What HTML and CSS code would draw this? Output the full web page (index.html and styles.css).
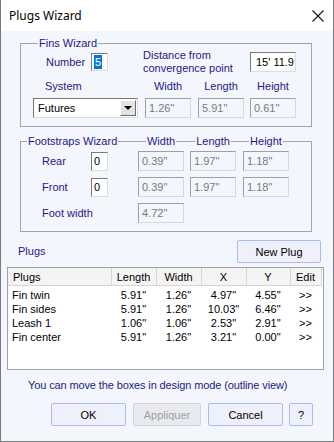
FILE: index.html
```html
<!DOCTYPE html>
<html lang="en">
<head>
<meta charset="UTF-8" />
<title>Plugs Wizard</title>
<link rel="stylesheet" href="styles.css">
</head>
<body>

  <div class="window">
    <div class="titlebar">
      <span class="title">Plugs Wizard</span>
      <svg class="close" width="12" height="12" viewBox="0 0 12 12">
        <path d="M0.5 0.5 L11.5 11.5 M11.5 0.5 L0.5 11.5" stroke="#111" stroke-width="1.1" fill="none" />
      </svg>
    </div>

    <div class="dialog">

      <div class="group fins">
        <div class="group-title"><span>Fins Wizard</span></div>
        <div class="fins-grid">
          <div class="number-cell">
            <span class="label number-label">Number</span>
            <div class="field num-field"><span class="selected">5</span></div>
          </div>
          <div class="label distance">Distance from<br>convergence point</div>
          <div class="field dist-field">15' 11.9</div>

          <div class="label system">System</div>
          <div class="label col-head">Width</div>
          <div class="label col-head">Length</div>
          <div class="label col-head">Height</div>

          <div class="select">
            <span class="select-text">Futures</span>
            <span class="select-btn"><span class="arrow"></span></span>
          </div>
          <div class="field off">1.26"</div>
          <div class="field off">5.91"</div>
          <div class="field off">0.61"</div>
        </div>
      </div>

      <div class="group straps">
        <div class="straps-head">
          <span class="head-main">Footstraps Wizard</span>
          <span class="head-col"><span>Width</span></span>
          <span class="head-col"><span>Length</span></span>
          <span class="head-col"><span>Height</span></span>
        </div>
        <div class="straps-grid">
          <div class="label">Rear</div>
          <div class="field num-field">0</div>
          <div class="field off">0.39"</div>
          <div class="field off">1.97"</div>
          <div class="field off">1.18"</div>

          <div class="label">Front</div>
          <div class="field num-field">0</div>
          <div class="field off">0.39"</div>
          <div class="field off">1.97"</div>
          <div class="field off">1.18"</div>

          <div class="label foot-label">Foot width</div>
          <div class="field off">4.72"</div>
        </div>
      </div>

      <div class="plugs-row">
        <span class="label">Plugs</span>
        <button class="btn new-plug">New Plug</button>
      </div>

      <div class="listview">
        <table>
          <colgroup>
            <col style="width: 103px">
            <col style="width: 45px">
            <col style="width: 45px">
            <col style="width: 45px">
            <col style="width: 44px">
            <col style="width: 31px">
            <col>
          </colgroup>
          <thead>
            <tr>
              <th class="name">Plugs</th>
              <th>Length</th>
              <th>Width</th>
              <th>X</th>
              <th>Y</th>
              <th>Edit</th>
              <th class="rest"></th>
            </tr>
          </thead>
          <tbody>
            <tr class="first">
              <td class="name">Fin twin</td><td>5.91"</td><td>1.26"</td><td>4.97"</td><td>4.55"</td><td>&gt;&gt;</td><td></td>
            </tr>
            <tr>
              <td class="name">Fin sides</td><td>5.91"</td><td>1.26"</td><td>10.03"</td><td>6.46"</td><td>&gt;&gt;</td><td></td>
            </tr>
            <tr>
              <td class="name">Leash 1</td><td>1.06"</td><td>1.06"</td><td>2.53"</td><td>2.91"</td><td>&gt;&gt;</td><td></td>
            </tr>
            <tr>
              <td class="name">Fin center</td><td>5.91"</td><td>1.26"</td><td>3.21"</td><td>0.00"</td><td>&gt;&gt;</td><td></td>
            </tr>
          </tbody>
        </table>
      </div>

      <div class="hint">You can move the boxes in design mode (outline view)</div>

      <div class="buttons">
        <button class="btn ok">OK</button>
        <button class="btn apply" disabled>Appliquer</button>
        <button class="btn cancel">Cancel</button>
        <button class="btn help">?</button>
      </div>

    </div>
  </div>

</body>
</html>
```

FILE: styles.css
```css
body {
  margin: 0;
  background: #ffffff;
  font-family: "Liberation Sans", Arial, sans-serif;
  font-size: 11px;
}

.window {
  width: 334px;
  height: 442px;
  box-sizing: border-box;
  border-left: 1px solid #7a7a7a;
  border-right: 1px solid #7a7a7a;
  border-bottom: 1px solid #7a7a7a;
  background: #f3f6fc;
  overflow: hidden;
}

.titlebar {
  height: 31px;
  background: #ffffff;
  display: flex;
  align-items: center;
  justify-content: space-between;
  padding: 0 9px 0 8px;
}

.title {
  font-family: "Noto Sans", sans-serif;
  font-size: 12px;
  color: #000;
}

.dialog {
  display: flex;
  flex-direction: column;
}

.label {
  color: #1b1b86;
  line-height: 13px;
}

/* group boxes */
.group {
  border: 1px solid #a5a5a5;
  width: 292px;
  box-sizing: border-box;
  margin-left: 19px;
}

.group-title {
  margin-top: -7px;
  height: 13px;
  line-height: 13px;
  padding-left: 5px;
  color: #1b1b86;
}

.group-title span {
  background: #f3f6fc;
  padding: 0 1px;
}

.fins {
  margin-top: 12px;
  padding: 0 15px 8px 12px;
}

.fins-grid {
  display: grid;
  grid-template-columns: 112px 53px 52px 46px;
  grid-template-rows: 24px 24px 20px;
  align-items: center;
}

.number-cell {
  display: flex;
  align-items: center;
  padding-left: 13px;
}

.number-label {
  width: 45px;
}

.distance {
  grid-column: 2 / 4;
  margin-left: -2px;
}

.system {
  padding-left: 12px;
}

.col-head {
  width: 46px;
  text-align: center;
}

/* text boxes */
.field {
  box-sizing: border-box;
  height: 20px;
  width: 46px;
  background: #ffffff;
  border: 1px solid;
  border-color: #7a7a7a #dcdcdc #dcdcdc #7a7a7a;
  padding-left: 3px;
  line-height: 18px;
  color: #000;
  white-space: nowrap;
  overflow: hidden;
}

.field.off {
  background: #f3f6fc;
  color: #7a7a7a;
  border-color: #a0a0a0 #d8d8d8 #d8d8d8 #a0a0a0;
}

.num-field {
  width: 17px;
  height: 19px;
  padding-left: 2px;
  line-height: 17px;
}

.fins .num-field {
  height: 18px;
  line-height: 16px;
}

.selected {
  display: inline-block;
  background: #0078d7;
  color: #fff;
  padding: 0 1px;
  line-height: 14px;
}

.dist-field {
  padding-left: 5px;
}

.select {
  width: 105px;
  height: 20px;
  box-sizing: border-box;
  background: #fff;
  border: 1px solid;
  border-color: #7a7a7a #dcdcdc #dcdcdc #7a7a7a;
  display: flex;
  align-items: center;
  justify-content: space-between;
  padding: 0 1px 0 4px;
}

.select-text {
  color: #000;
}

.select-btn {
  width: 16px;
  height: 16px;
  box-sizing: border-box;
  background: #e3e3e3;
  border: 1px solid;
  border-color: #ffffff #6e6e6e #6e6e6e #ffffff;
  display: flex;
  align-items: center;
  justify-content: center;
}

.arrow {
  width: 0;
  height: 0;
  border-left: 4px solid transparent;
  border-right: 4px solid transparent;
  border-top: 4px solid #000;
}

/* footstraps */
.straps {
  margin-top: 14px;
  padding: 0 21px 5px 21px;
}

.straps-head,
.straps-grid {
  display: grid;
  grid-template-columns: 49px 47px 52px 53px 47px;
}

.straps-head {
  margin-top: -7px;
  height: 13px;
  line-height: 13px;
  color: #1b1b86;
}

.head-main {
  grid-column: 1 / 3;
  margin-left: -15px;
}

.head-main,
.head-col span {
  background: #f3f6fc;
  padding: 0 1px;
  justify-self: start;
}

.head-col {
  width: 46px;
  text-align: center;
}

.straps-grid {
  grid-template-rows: 26px 26px 26px;
  align-items: center;
}

.foot-label {
  grid-column: 1 / 3;
}

/* plugs list */
.plugs-row {
  display: flex;
  align-items: center;
  justify-content: space-between;
  margin: 8px 12px 0 17px;
}

.btn {
  font-family: "Liberation Sans", Arial, sans-serif;
  font-size: 11px;
  color: #000;
  background: #eef1fb;
  border: 1px solid #a7bcf0;
  border-radius: 2px;
  height: 23px;
  padding: 0;
}

.new-plug {
  width: 84px;
}

.listview {
  margin: 4px 0 0 6px;
  width: 317px;
  height: 103px;
  box-sizing: border-box;
  border: 1px solid #a0a0a0;
  background: #fff;
  overflow: hidden;
}

table {
  border-collapse: collapse;
  table-layout: fixed;
  width: 315px;
}

th {
  font-weight: normal;
  height: 17px;
  padding: 0;
  background: #f4f4f4;
  border-right: 1px solid #d6d6d6;
  border-bottom: 1px solid #d6d6d6;
  color: #000;
  text-align: center;
}

th.rest {
  border-right: none;
  background: #fff;
  border-bottom: none;
}

th.name,
td.name {
  text-align: left;
  padding-left: 5px;
}

td.name {
  padding-left: 4px;
}

td {
  height: 14px;
  padding: 0;
  line-height: 14px;
  text-align: center;
  color: #000;
  white-space: nowrap;
}

tr.first td {
  padding-top: 2px;
}

.hint {
  color: #1b1b86;
  margin: 9px 0 0 27px;
  line-height: 13px;
  letter-spacing: -0.12px;
}

.buttons {
  display: flex;
  margin: 11px 0 0 50px;
}

.ok,
.cancel {
  width: 75px;
}

.apply {
  width: 68px;
  margin: 0 7px;
  background: #e9eaef;
  border-color: #d4d4d8;
  color: #a0a0a0;
}

.help {
  width: 24px;
  margin-left: 6px;
}
```
